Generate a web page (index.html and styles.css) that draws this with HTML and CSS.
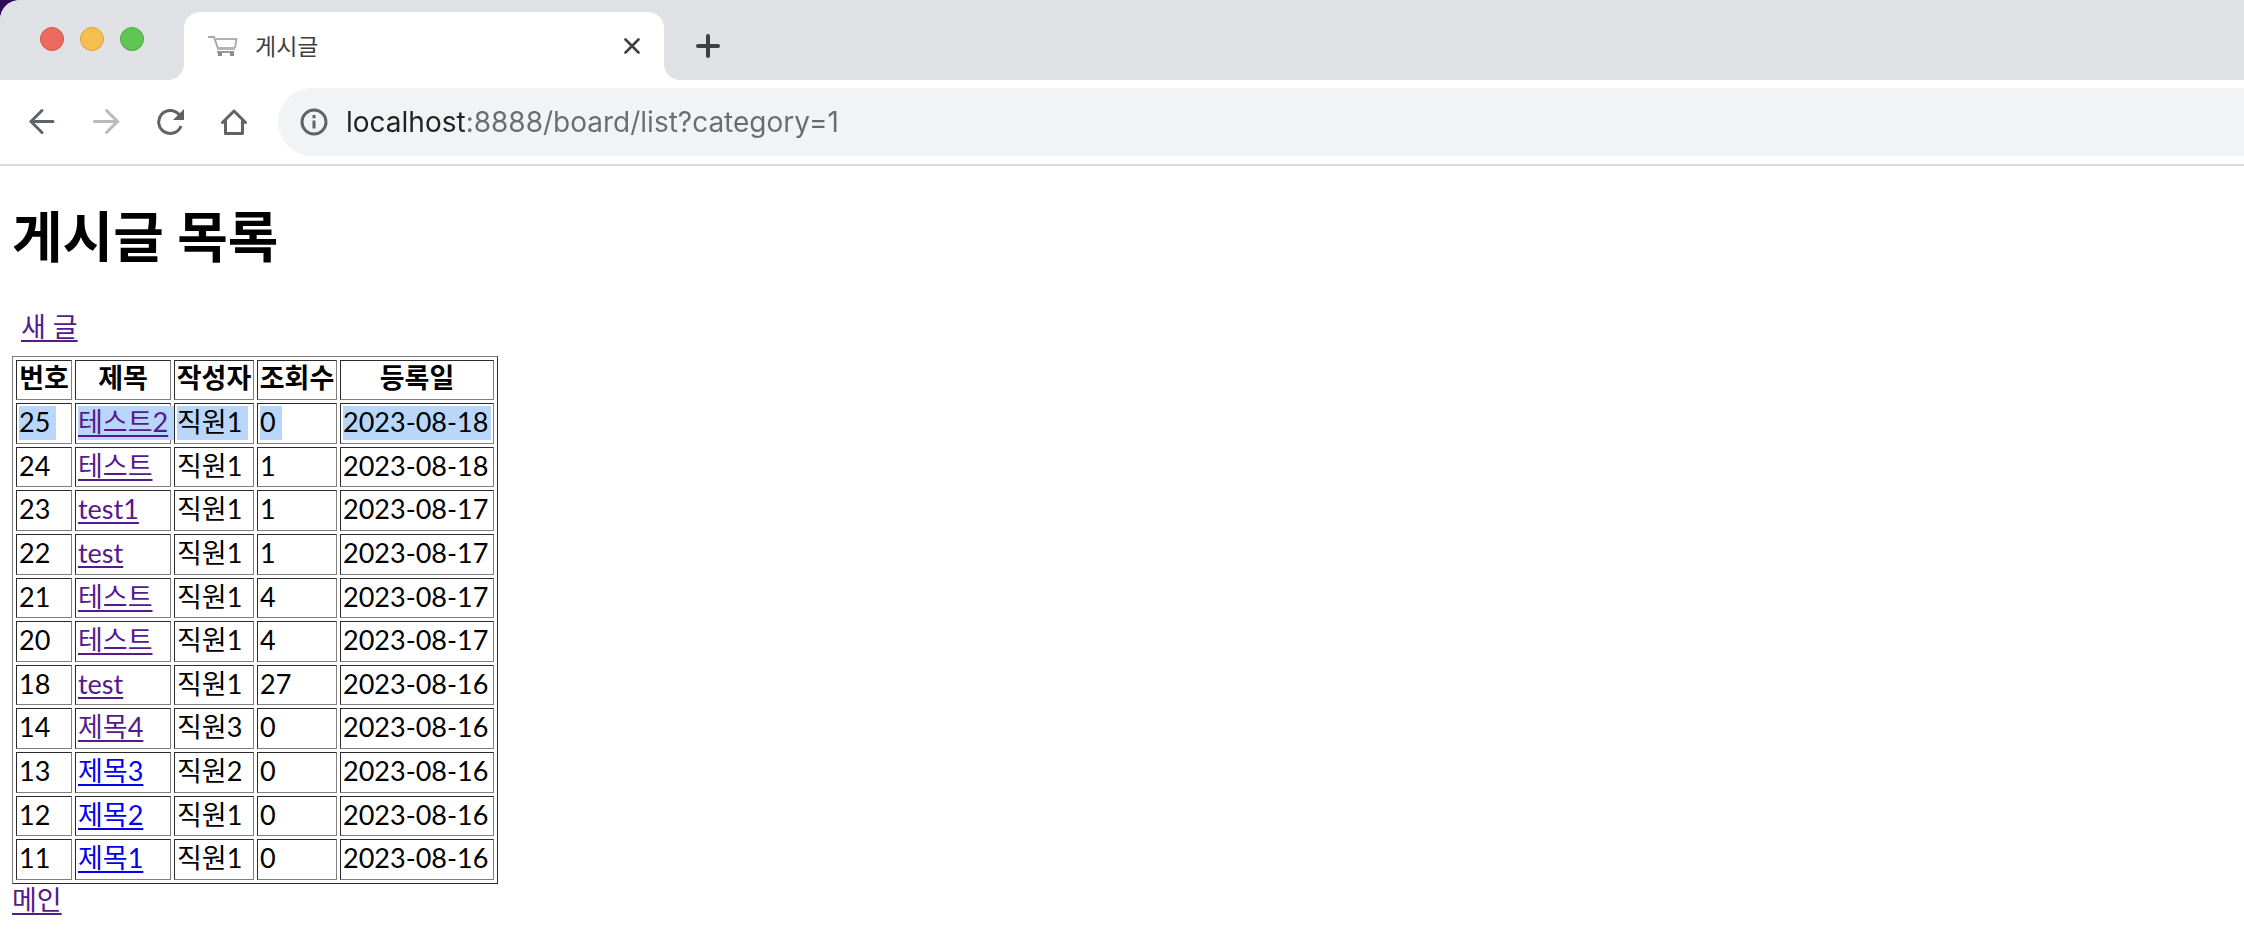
FILE: index.html
```html
<!DOCTYPE html>
<html lang="ko">
<head>
    <meta charset="UTF-8">
    <meta name="viewport" content="width=device-width, initial-scale=1.0">
    <title>게시글</title>
    <link rel="stylesheet" href="styles.css">
</head>
<body>
    <div class="window">
        <!-- Tab strip -->
        <div class="tab-strip">
            <div class="window-controls">
                <button class="light close" aria-label="닫기"></button>
                <button class="light minimize" aria-label="최소화"></button>
                <button class="light zoom" aria-label="확대"></button>
            </div>
            <div class="tab-slot">
                <div class="tab">
                    <svg class="favicon" width="30" height="22" viewBox="0 0 30 22" fill="none">
                        <path d="M0 2h6l4.500 13" stroke="#a8a8a8" stroke-width="2"/>
                        <path d="M8 4h20.500l-1.500 9" stroke="#b0b0b0" stroke-width="2"/>
                        <path d="M10 13.500h17" stroke="#b5b5b5" stroke-width="3"/>
                        <path d="M9 17h17" stroke="#9a9a9a" stroke-width="2"/>
                        <path d="M10 17h4v4h-4zM22 17h4v4h-4z" fill="#8c8c8c"/>
                    </svg>
                    <span class="tab-title">게시글</span>
                    <button class="tab-close" aria-label="탭 닫기">
                        <svg width="16" height="16" viewBox="0 0 16 16">
                            <path d="M1.500 1.500l13 13M14.500 1.500l-13 13" stroke="#3c4043" stroke-width="2.600" stroke-linecap="round"/>
                        </svg>
                    </button>
                </div>
            </div>
            <div class="strip-rest">
                <button class="new-tab" aria-label="새 탭">
                    <svg width="24" height="24" viewBox="0 0 24 24">
                        <path d="M12 2v20M2 12h20" stroke="#3c4043" stroke-width="4" stroke-linecap="round"/>
                    </svg>
                </button>
            </div>
        </div>

        <!-- Toolbar -->
        <div class="toolbar">
            <button class="tool" aria-label="뒤로">
                <svg width="28" height="28" viewBox="0 0 28 28" fill="none" stroke="#5f6368" stroke-width="3" stroke-linecap="round">
                    <path d="M25 13.500H3M14 2.500L3 13.500l11 11"/>
                </svg>
            </button>
            <button class="tool" aria-label="앞으로">
                <svg width="28" height="28" viewBox="0 0 28 28" fill="none" stroke="#bababa" stroke-width="3" stroke-linecap="round">
                    <path d="M2.500 13.500h23M14.500 2.500l11 11-11 11"/>
                </svg>
            </button>
            <button class="tool" aria-label="새로고침">
                <svg width="28" height="28" viewBox="0 0 28 28" fill="none">
                    <path d="M23 6.500A11.500 11.500 0 1 0 25 18" stroke="#5f6368" stroke-width="3"/>
                    <path d="M28 1v11H17z" fill="#5f6368"/>
                </svg>
            </button>
            <button class="tool" aria-label="홈">
                <svg width="28" height="28" viewBox="0 0 28 28" fill="none" stroke="#5f6368" stroke-width="3" stroke-linejoin="round" stroke-linecap="round">
                    <path d="M2.500 14.500L14 3l11.500 11.500"/>
                    <path d="M5.500 13v12.500h17V13"/>
                </svg>
            </button>
            <div class="omnibox">
                <svg width="28" height="28" viewBox="0 0 28 28" fill="none">
                    <circle cx="14" cy="14" r="12" stroke="#5f6368" stroke-width="3"/>
                    <path d="M14 12.500v8M14 7v3.200" stroke="#5f6368" stroke-width="3"/>
                </svg>
                <input class="url" type="text" aria-label="주소" value="localhost:8888/board/list?category=1">
            </div>
        </div>

        <!-- Page -->
        <div class="page">
            <h1>게시글 목록</h1>
            <div class="actions"><a class="visited" href="#">새 글</a></div>
            <table>
                <thead>
                    <tr>
                        <th class="col-no">번호</th>
                        <th class="col-title">제목</th>
                        <th class="col-writer">작성자</th>
                        <th class="col-views">조회수</th>
                        <th class="col-date">등록일</th>
                    </tr>
                </thead>
                <tbody>
                    <tr class="selected">
                        <td><span>25</span></td>
                        <td><span><a class="visited" href="#">테스트2</a></span></td>
                        <td><span>직원1</span></td>
                        <td><span>0</span></td>
                        <td><span>2023-08-18</span></td>
                    </tr>
                    <tr><td>24</td><td><a class="visited" href="#">테스트</a></td><td>직원1</td><td>1</td><td>2023-08-18</td></tr>
                    <tr><td>23</td><td><a class="visited" href="#">test1</a></td><td>직원1</td><td>1</td><td>2023-08-17</td></tr>
                    <tr><td>22</td><td><a class="visited" href="#">test</a></td><td>직원1</td><td>1</td><td>2023-08-17</td></tr>
                    <tr><td>21</td><td><a class="visited" href="#">테스트</a></td><td>직원1</td><td>4</td><td>2023-08-17</td></tr>
                    <tr><td>20</td><td><a class="visited" href="#">테스트</a></td><td>직원1</td><td>4</td><td>2023-08-17</td></tr>
                    <tr><td>18</td><td><a class="visited" href="#">test</a></td><td>직원1</td><td>27</td><td>2023-08-16</td></tr>
                    <tr><td>14</td><td><a class="visited" href="#">제목4</a></td><td>직원3</td><td>0</td><td>2023-08-16</td></tr>
                    <tr><td>13</td><td><a href="#">제목3</a></td><td>직원2</td><td>0</td><td>2023-08-16</td></tr>
                    <tr><td>12</td><td><a href="#">제목2</a></td><td>직원1</td><td>0</td><td>2023-08-16</td></tr>
                    <tr><td>11</td><td><a href="#">제목1</a></td><td>직원1</td><td>0</td><td>2023-08-16</td></tr>
                </tbody>
            </table>
            <div class="footer-link"><a class="visited" href="#">메인</a></div>
        </div>
    </div>
</body>
</html>
```
FILE: styles.css
```css
* {
    box-sizing: border-box;
}
body {
    margin: 0;
    background: #2e0a57;
    font-family: Lato, 'Noto Sans CJK KR', sans-serif;
    font-size: 27px;
    line-height: 34px;
    color: #000;
}
button {
    padding: 0;
    border: 0;
    background: none;
}
svg {
    display: block;
}
.window {
    min-height: 100vh;
    background: #fff;
    border-top-left-radius: 20px;
    overflow: hidden;
}

/* Tab strip */
.tab-strip {
    display: flex;
    height: 80px;
}
.window-controls {
    display: flex;
    gap: 16px;
    width: 184px;
    padding: 27px 0 0 40px;
    background: #dfe1e5;
    border-bottom-right-radius: 16px;
}
.light {
    width: 24px;
    height: 24px;
    border-radius: 50%;
    border: 1px solid;
}
.close {
    background: #ec6a5e;
    border-color: #d1554a;
}
.minimize {
    background: #f5bf4f;
    border-color: #d8a23c;
}
.zoom {
    background: #61c554;
    border-color: #4ea73f;
}
.tab-slot {
    width: 480px;
    padding-top: 12px;
    background: #dfe1e5;
}
.tab {
    display: flex;
    align-items: center;
    height: 68px;
    padding: 0 24px;
    background: #fff;
    border-radius: 16px 16px 0 0;
}
.tab-title {
    flex: 1;
    margin-left: 17px;
    font-size: 23px;
    color: #3c4043;
}
.strip-rest {
    display: flex;
    flex: 1;
    align-items: center;
    padding: 12px 32px 0;
    background: #dfe1e5;
    border-bottom-left-radius: 16px;
}

/* Toolbar */
.toolbar {
    display: flex;
    padding: 8px 0 8px 10px;
    border-bottom: 2px solid #dcdcdc;
}
.tool {
    display: flex;
    align-items: center;
    justify-content: center;
    width: 64px;
}
.omnibox {
    display: flex;
    flex: 1;
    align-items: center;
    gap: 18px;
    height: 68px;
    margin-left: 12px;
    padding-left: 22px;
    background: #f1f3f4;
    border-radius: 34px 0 0 34px;
}
.url {
    flex: 1;
    padding: 0;
    border: 0;
    outline: 0;
    font-family: Inter, sans-serif;
    font-size: 28px;
    line-height: 36px;
    color: #6b6c6e;
    /* host name darker than the rest of the address */
    background: linear-gradient(90deg, #202124 120px, #6b6c6e 120px);
    -webkit-background-clip: text;
    background-clip: text;
    -webkit-text-fill-color: transparent;
}

/* Page */
.page {
    padding: 0 12px;
}
h1 {
    margin: 36px 0 40px;
    font-size: 55px;
    line-height: 68px;
}
a {
    color: #0000ee;
    text-decoration-thickness: 2px;
    text-underline-offset: 3px;
}
a.visited {
    color: #551a8b;
}
.actions {
    padding-left: 9px;
    margin-bottom: 12px;
    word-spacing: normal;
}
table {
    table-layout: fixed;
    width: 486px;
    height: 528px;
    border: 1px solid;
    border-color: #808080 #2b2b2b #2b2b2b #808080;
    border-spacing: 3px;
    line-height: 32px;
}
th,
td {
    padding: 2px 2px 4px;
    border: 1px solid;
    border-color: #2b2b2b #808080 #808080 #2b2b2b;
    text-align: left;
    vertical-align: top;
    white-space: nowrap;
}
th {
    padding: 1px 0 5px;
    text-align: center;
}
.col-no {
    width: 56px;
}
.col-title {
    width: 96px;
}
.col-writer,
.col-views {
    width: 80px;
}
.col-date {
    width: 154px;
}
.selected td {
    padding-bottom: 2px;
}
.selected span {
    display: block;
    width: fit-content;
    padding: 0 6px 2px 0;
    background: #b9d6fb;
}
.selected td:last-child span {
    width: auto;
    padding-right: 0;
}
.footer-link {
    line-height: 31px;
}
```
